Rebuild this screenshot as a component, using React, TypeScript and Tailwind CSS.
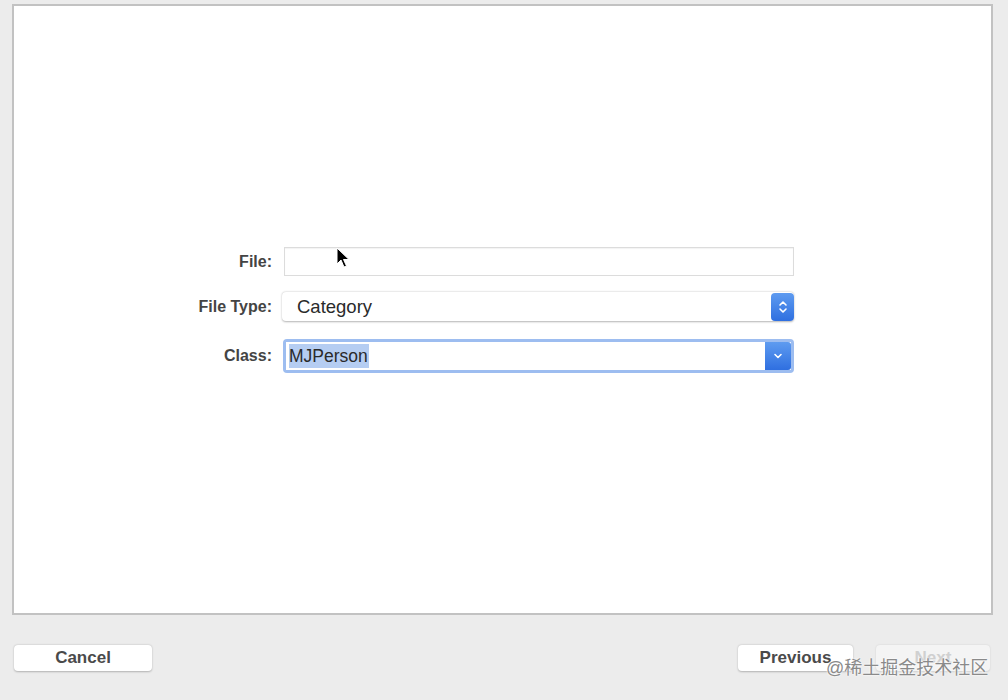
const font = { fontFamily: '"Liberation Sans", Arial, sans-serif' };

const Stepper = () => (
  <div className="flex h-[28px] w-[23px] items-center justify-center rounded-[4px] bg-gradient-to-b from-[#5e9bf0] to-[#2f6fe0]">
    <svg width="10" height="16" viewBox="0 0 10 16" fill="none" stroke="white" strokeWidth="1.6" strokeLinecap="round" strokeLinejoin="round">
      <path d="M2 6 L5 3 L8 6" />
      <path d="M2 10 L5 13 L8 10" />
    </svg>
  </div>
);

const Chevron = () => (
  <div className="flex h-[28px] w-[26px] items-center justify-center rounded-r-[3px] bg-gradient-to-b from-[#5e9bf0] to-[#2f6fe0]">
    <svg width="10" height="8" viewBox="0 0 10 8" fill="none" stroke="white" strokeWidth="1.6" strokeLinecap="round" strokeLinejoin="round">
      <path d="M2 2.5 L5 5.5 L8 2.5" />
    </svg>
  </div>
);

export default function App() {
  return (
    <div className="relative h-[700px] w-[1008px] overflow-hidden bg-[#ececec] text-[#2b2b2b]" style={font}>
      <div className="ml-[12px] mt-[4px] h-[611px] w-[981px] border-2 border-[#c2c2c2] bg-white pt-[241px]">
        <div className="grid grid-cols-[258px_512px] items-center gap-x-[12px]">
          <span className="text-right text-[16px] font-bold text-[#444]">File:</span>
          <div className="h-[29px] w-[510px] border border-[#dcdcdc] bg-white shadow-[inset_0_1px_1px_rgba(0,0,0,0.05)]" />

          <span className="mt-[16px] text-right text-[16px] font-bold text-[#444]">File Type:</span>
          <div className="mt-[16px] flex h-[29px] w-[512px] -ml-[2px] items-center justify-between rounded-[4px] bg-white shadow-[0_0.5px_2px_rgba(0,0,0,0.3)]">
            <span className="pl-[15px] text-[18.5px] text-[#2a2a2a]">Category</span>
            <Stepper />
          </div>

          <span className="mt-[18px] text-right text-[16px] font-bold text-[#444]">Class:</span>
          <div className="mt-[18px] -ml-[1px] w-[511px] rounded-[4px] bg-[#9dbdf0] p-[3px]">
            <div className="flex h-[28px] items-center justify-between bg-white">
              <span className="ml-[3px] bg-[#b5cdf2] pr-[1px] text-[17.5px] leading-[24px] text-[#2a2a2a]">MJPerson</span>
              <Chevron />
            </div>
          </div>
        </div>
      </div>

      <div className="mt-[30px] flex items-center px-[14px]">
        <button className="h-[26px] w-[138px] rounded-[4px] bg-white text-[17px] font-bold text-[#4a4a4a] shadow-[0_0.5px_2px_rgba(0,0,0,0.25)]">Cancel</button>
        <div className="flex-1" />
        <button className="h-[26px] w-[115px] rounded-[4px] bg-white text-[17px] font-bold text-[#4a4a4a] shadow-[0_0.5px_2px_rgba(0,0,0,0.25)]">Previous</button>
        <button className="ml-[23px] mr-[4px] h-[26px] w-[114px] rounded-[4px] bg-[#f4f4f4] text-[17px] font-bold text-[#d0d0d0] shadow-[0_0.5px_2px_rgba(0,0,0,0.12)]">Next</button>
      </div>

      <svg className="absolute left-[336px] top-[247px]" width="14" height="22" viewBox="0 0 14 22">
        <path d="M1 1 L1 17 L5 13 L8 20 L10.5 19 L7.5 12.5 L13 12.5 Z" fill="black" stroke="white" strokeWidth="1" />
      </svg>

      <span
        className="absolute left-[826px] top-[655px] text-[18px] text-[#8a8a8a]"
        style={{ fontFamily: '"Liberation Sans", "Noto Sans CJK SC", sans-serif', textShadow: '0 0 2px #fff, 0 0 2px #fff' }}
      >
        @稀土掘金技术社区
      </span>
    </div>
  );
}
